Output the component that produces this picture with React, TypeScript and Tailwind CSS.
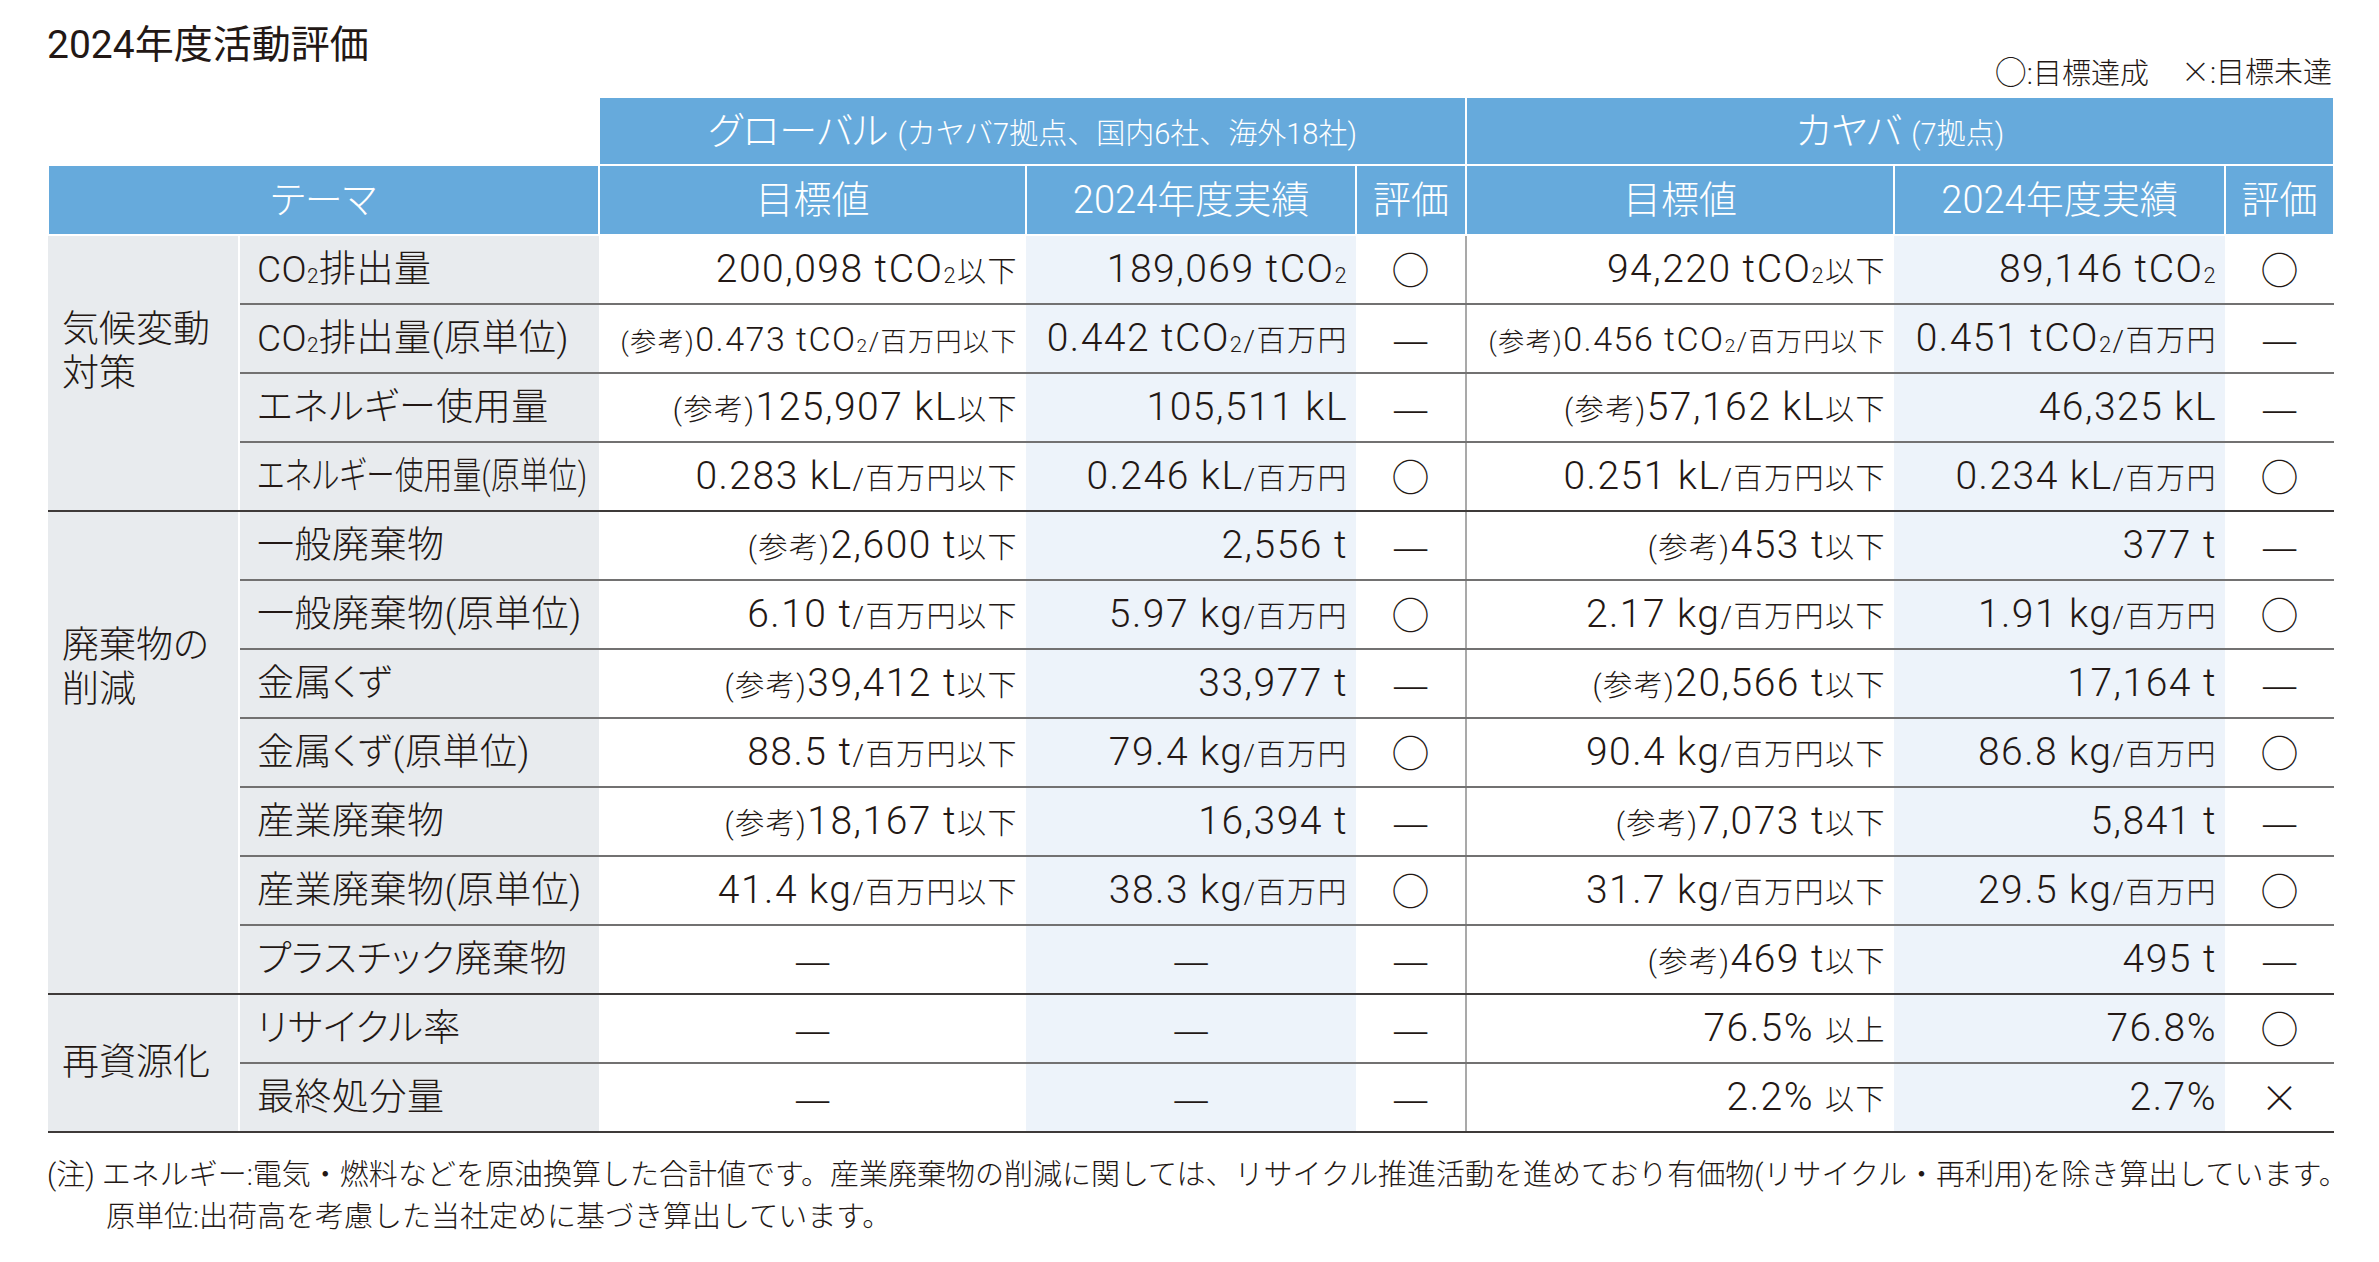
import React from "react";

const FONT = "font-['Roboto','Noto_Sans_CJK_JP',sans-serif] font-light";
const PALT = "[font-feature-settings:'palt']";
const NOPALT = "[font-feature-settings:normal]";
const CJK = "font-['Noto_Sans_CJK_JP',sans-serif]";

function Two() {
  return <span className="text-[0.56em] align-[-0.04em]">2</span>;
}

function Ref({ c }: { c?: boolean }) {
  return <span className={c ? "text-[26px]" : "text-[29px]"}>(参考)</span>;
}

function S({ children, c }: { children: React.ReactNode; c?: boolean }) {
  return <span className={c ? "text-[26px]" : "text-[29px]"}>{children}</span>;
}

function Dash() {
  return <span className={`${CJK} text-[42px] tracking-normal`}>—</span>;
}

function Ok() {
  return <span className={`${CJK} text-[38px] tracking-normal`}>○</span>;
}

function Ng() {
  return <span className={`${CJK} text-[38px] tracking-normal`}>×</span>;
}

type Row = {
  theme: React.ReactNode;
  gt: React.ReactNode;
  ga: React.ReactNode;
  ge: React.ReactNode;
  kt: React.ReactNode;
  ka: React.ReactNode;
  ke: React.ReactNode;
};

const groups: { cat: React.ReactNode; catCls: string; rows: Row[] }[] = [
  {
    cat: (
      <>
        気候変動
        <br />
        対策
      </>
    ),
    catCls: "align-top pt-[72px]",
    rows: [
      {
        theme: <>CO<Two />排出量</>,
        gt: <>200,098 tCO<Two /><S>以下</S></>,
        ga: <>189,069 tCO<Two /></>,
        ge: <Ok />,
        kt: <>94,220 tCO<Two /><S>以下</S></>,
        ka: <>89,146 tCO<Two /></>,
        ke: <Ok />,
      },
      {
        theme: <>CO<Two />排出量(原単位)</>,
        gt: (
          <span className="text-[34px]">
            <Ref c />0.473 tCO<Two /><S c>/百万円以下</S>
          </span>
        ),
        ga: <>0.442 tCO<Two /><S>/百万円</S></>,
        ge: <Dash />,
        kt: (
          <span className="text-[34px]">
            <Ref c />0.456 tCO<Two /><S c>/百万円以下</S>
          </span>
        ),
        ka: <>0.451 tCO<Two /><S>/百万円</S></>,
        ke: <Dash />,
      },
      {
        theme: <>エネルギー使用量</>,
        gt: <><Ref />125,907 kL<S>以下</S></>,
        ga: <>105,511 kL</>,
        ge: <Dash />,
        kt: <><Ref />57,162 kL<S>以下</S></>,
        ka: <>46,325 kL</>,
        ke: <Dash />,
      },
      {
        theme: (
          <span className="inline-block origin-left scale-x-[0.77]">エネルギー使用量(原単位)</span>
        ),
        gt: <>0.283 kL<S>/百万円以下</S></>,
        ga: <>0.246 kL<S>/百万円</S></>,
        ge: <Ok />,
        kt: <>0.251 kL<S>/百万円以下</S></>,
        ka: <>0.234 kL<S>/百万円</S></>,
        ke: <Ok />,
      },
    ],
  },
  {
    cat: (
      <>
        廃棄物の
        <br />
        削減
      </>
    ),
    catCls: "align-top pt-[112px]",
    rows: [
      {
        theme: <>一般廃棄物</>,
        gt: <><Ref />2,600 t<S>以下</S></>,
        ga: <>2,556 t</>,
        ge: <Dash />,
        kt: <><Ref />453 t<S>以下</S></>,
        ka: <>377 t</>,
        ke: <Dash />,
      },
      {
        theme: <>一般廃棄物(原単位)</>,
        gt: <>6.10 t<S>/百万円以下</S></>,
        ga: <>5.97 kg<S>/百万円</S></>,
        ge: <Ok />,
        kt: <>2.17 kg<S>/百万円以下</S></>,
        ka: <>1.91 kg<S>/百万円</S></>,
        ke: <Ok />,
      },
      {
        theme: <>金属くず</>,
        gt: <><Ref />39,412 t<S>以下</S></>,
        ga: <>33,977 t</>,
        ge: <Dash />,
        kt: <><Ref />20,566 t<S>以下</S></>,
        ka: <>17,164 t</>,
        ke: <Dash />,
      },
      {
        theme: <>金属くず(原単位)</>,
        gt: <>88.5 t<S>/百万円以下</S></>,
        ga: <>79.4 kg<S>/百万円</S></>,
        ge: <Ok />,
        kt: <>90.4 kg<S>/百万円以下</S></>,
        ka: <>86.8 kg<S>/百万円</S></>,
        ke: <Ok />,
      },
      {
        theme: <>産業廃棄物</>,
        gt: <><Ref />18,167 t<S>以下</S></>,
        ga: <>16,394 t</>,
        ge: <Dash />,
        kt: <><Ref />7,073 t<S>以下</S></>,
        ka: <>5,841 t</>,
        ke: <Dash />,
      },
      {
        theme: <>産業廃棄物(原単位)</>,
        gt: <>41.4 kg<S>/百万円以下</S></>,
        ga: <>38.3 kg<S>/百万円</S></>,
        ge: <Ok />,
        kt: <>31.7 kg<S>/百万円以下</S></>,
        ka: <>29.5 kg<S>/百万円</S></>,
        ke: <Ok />,
      },
      {
        theme: <>プラスチック廃棄物</>,
        gt: null,
        ga: null,
        ge: <Dash />,
        kt: <><Ref />469 t<S>以下</S></>,
        ka: <>495 t</>,
        ke: <Dash />,
      },
    ],
  },
  {
    cat: <>再資源化</>,
    catCls: "align-middle",
    rows: [
      {
        theme: <>リサイクル率</>,
        gt: null,
        ga: null,
        ge: <Dash />,
        kt: <>76.5% <S>以上</S></>,
        ka: <>76.8%</>,
        ke: <Ok />,
      },
      {
        theme: <>最終処分量</>,
        gt: null,
        ga: null,
        ge: <Dash />,
        kt: <>2.2% <S>以下</S></>,
        ka: <>2.7%</>,
        ke: <Ng />,
      },
    ],
  },
];

const HEAD = "bg-[#66aadc] border-[2px] border-white font-light";
const VAL = "text-right pr-[8px] whitespace-nowrap tracking-[1.5px]";

export default function App() {
  return (
    <div className={`w-[2379px] h-[1262px] bg-white px-[47px] pt-[23px] text-[#231815] ${FONT}`}>
      {/* Title + legend */}
      <div className={`flex justify-between items-start ${PALT}`}>
        <h1 className="text-[39px] leading-[44px] font-normal">2024年度活動評価</h1>
        <div className="mt-[30px] text-[29px] leading-[34px] flex gap-[32px]">
          <span>
            <span className={`${CJK} text-[32px]`}>○</span>:目標達成
          </span>
          <span>
            <span className={CJK}>×</span>:目標未達
          </span>
        </div>
      </div>

      <table className={`mt-[5px] w-[2286px] table-fixed border-collapse ${PALT}`}>
        <colgroup>
          <col className="w-[191px]" />
          <col className="w-[360px]" />
          <col className="w-[427px]" />
          <col className="w-[330px]" />
          <col className="w-[110px]" />
          <col className="w-[428px]" />
          <col className="w-[331px]" />
          <col className="w-[109px]" />
        </colgroup>
        <thead className="text-white">
          <tr className="h-[68px]">
            <td colSpan={2} />
            <th colSpan={3} className={`${HEAD} text-[38px]`}>
              グローバル <span className={`text-[29px] ${NOPALT}`}>(カヤバ7拠点、国内6社、海外18社)</span>
            </th>
            <th colSpan={3} className={`${HEAD} text-[38px]`}>
              カヤバ <span className={`text-[29px] ${NOPALT}`}>(7拠点)</span>
            </th>
          </tr>
          <tr className="h-[70px] text-[38px]">
            <th colSpan={2} className={HEAD}>テーマ</th>
            <th className={HEAD}>目標値</th>
            <th className={HEAD}>2024年度実績</th>
            <th className={HEAD}>評価</th>
            <th className={HEAD}>目標値</th>
            <th className={HEAD}>2024年度実績</th>
            <th className={HEAD}>評価</th>
          </tr>
        </thead>
        <tbody className="text-[39px] leading-none">
          {groups.map((g) =>
            g.rows.map((r, i) => {
              const last = i === g.rows.length - 1;
              const line = last ? "border-b-[2px] border-b-[#3e3a39]" : "border-b-[2px] border-b-[#727171]";
              return (
                <tr key={`${i}`} className="h-[69px]">
                  {i === 0 && (
                    <td
                      rowSpan={g.rows.length}
                      className={`bg-[#e8ebee] border-r-[2px] border-r-white border-b-[2px] border-b-[#3e3a39] pl-[14px] text-[37px] leading-[44px] ${g.catCls}`}
                    >
                      {g.cat}
                    </td>
                  )}
                  <td className={`bg-[#e8ebee] pl-[17px] text-[37px] whitespace-nowrap tracking-[0.5px] ${line}`}>
                    {r.theme}
                  </td>
                  <td className={`${VAL} ${line} ${r.gt ? "" : "!text-center !pr-0"}`}>{r.gt ?? <Dash />}</td>
                  <td className={`bg-[#edf3fa] ${VAL} ${line} ${r.ga ? "" : "!text-center !pr-0"}`}>
                    {r.ga ?? <Dash />}
                  </td>
                  <td className={`text-center ${line}`}>{r.ge}</td>
                  <td className={`${VAL} border-l-[2px] border-l-[#a9a9a9] ${line}`}>{r.kt}</td>
                  <td className={`bg-[#edf3fa] ${VAL} ${line}`}>{r.ka}</td>
                  <td className={`text-center ${line}`}>{r.ke}</td>
                </tr>
              );
            })
          )}
        </tbody>
      </table>

      {/* Notes */}
      <div className="mt-[21px] text-[29px] leading-[42px] whitespace-nowrap">
        <p>
          (注) エネルギー:電気・燃料などを原油換算した合計値です。産業廃棄物の削減に関しては、リサイクル推進活動を進めており有価物(リサイクル・再利用)を除き算出しています。
        </p>
        <p className="pl-[59px]">原単位:出荷高を考慮した当社定めに基づき算出しています。</p>
      </div>
    </div>
  );
}
